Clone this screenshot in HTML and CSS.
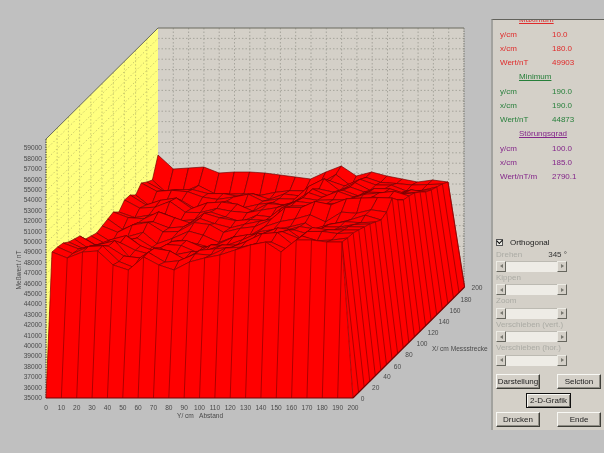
FILE: index.html
```html
<!DOCTYPE html>
<html lang="de">
<head>
<meta charset="utf-8">
<title>Messwert 3D</title>
<link rel="stylesheet" href="styles.css">
</head>
<body>
<div class="stage">
  <svg class="chart" id="chart" width="491" height="453" viewBox="0 0 491 453" xmlns="http://www.w3.org/2000/svg">
    <polygon class="wall-back" points="158,28 464,28 464,287 158,287"/>
    <polygon class="wall-side" points="46,139 158,28 158,287 46,398"/>
    <g id="grid"></g>
    <line class="edge" x1="158" y1="28" x2="464" y2="28"/>
    <line class="edge" x1="46" y1="139" x2="158" y2="28"/>
    <line class="edge-dot" x1="46" y1="139" x2="46" y2="398"/>
    <line class="edge-dot right" x1="464" y1="28" x2="464" y2="287"/>
    <g id="surface"></g>
    <g class="ticks end">
      <text x="42" y="400">35000</text><text x="42" y="389.6">36000</text><text x="42" y="379.2">37000</text><text x="42" y="368.8">38000</text><text x="42" y="358.4">39000</text>
      <text x="42" y="348">40000</text><text x="42" y="337.6">41000</text><text x="42" y="327.2">42000</text><text x="42" y="316.8">43000</text><text x="42" y="306.4">44000</text>
      <text x="42" y="296">45000</text><text x="42" y="285.6">46000</text><text x="42" y="275.2">47000</text><text x="42" y="264.8">48000</text><text x="42" y="254.4">49000</text>
      <text x="42" y="244">50000</text><text x="42" y="233.6">51000</text><text x="42" y="223.2">52000</text><text x="42" y="212.8">53000</text><text x="42" y="202.4">54000</text>
      <text x="42" y="192">55000</text><text x="42" y="181.6">56000</text><text x="42" y="171.2">57000</text><text x="42" y="160.8">58000</text><text x="42" y="150.4">59000</text>
    </g>
    <g class="ticks mid">
      <text x="46" y="409.5">0</text><text x="61.4" y="409.5">10</text><text x="76.7" y="409.5">20</text><text x="92" y="409.5">30</text><text x="107.4" y="409.5">40</text>
      <text x="122.8" y="409.5">50</text><text x="138.1" y="409.5">60</text><text x="153.5" y="409.5">70</text><text x="168.8" y="409.5">80</text><text x="184.2" y="409.5">90</text>
      <text x="199.5" y="409.5">100</text><text x="214.9" y="409.5">110</text><text x="230.2" y="409.5">120</text><text x="245.6" y="409.5">130</text><text x="260.9" y="409.5">140</text>
      <text x="276.3" y="409.5">150</text><text x="291.6" y="409.5">160</text><text x="307" y="409.5">170</text><text x="322.3" y="409.5">180</text><text x="337.7" y="409.5">190</text><text x="353" y="409.5">200</text>
    </g>
    <g class="ticks mid">
      <text x="362.5" y="400.5">0</text><text x="375.7" y="389.5">20</text><text x="387" y="378.5">40</text><text x="397.5" y="368.5">60</text><text x="409" y="356.5">80</text>
      <text x="422" y="345.5">100</text><text x="433" y="334.5">120</text><text x="444" y="323.5">140</text><text x="455" y="312.5">160</text><text x="466" y="301.5">180</text><text x="477" y="289.5">200</text>
    </g>
    <text class="ticks" x="177" y="417.5" xml:space="preserve">Y/ cm   Abstand</text>
    <text class="ticks" x="432" y="350.5">X/ cm Messstrecke</text>
    <text class="ticks mid" transform="translate(21 270) rotate(-90)">Meßwert / nT</text>
  </svg>

  <aside class="panel">
    <div class="info">
      <div class="heading red">Maximum</div>
      <div class="row red"><span>y/cm</span><span>10.0</span></div>
      <div class="row red"><span>x/cm</span><span>180.0</span></div>
      <div class="row red"><span>Wert/nT</span><span>49903</span></div>
      <div class="heading green">Minimum</div>
      <div class="row green"><span>y/cm</span><span>190.0</span></div>
      <div class="row green"><span>x/cm</span><span>190.0</span></div>
      <div class="row green"><span>Wert/nT</span><span>44873</span></div>
      <div class="heading purple">Störungsgrad</div>
      <div class="row purple"><span>y/cm</span><span>100.0</span></div>
      <div class="row purple"><span>x/cm</span><span>185.0</span></div>
      <div class="row purple"><span>Wert/nT/m</span><span>2790.1</span></div>
    </div>

    <label class="check"><span class="box"></span>Orthogonal</label>

    <div class="slider">
      <div class="slider-label"><span>Drehen</span><span class="slider-value">345 °</span></div>
      <div class="bar"><span class="arrow left"></span><span class="arrow right"></span></div>
    </div>
    <div class="slider">
      <div class="slider-label"><span>Kippen</span></div>
      <div class="bar"><span class="arrow left"></span><span class="arrow right"></span></div>
    </div>
    <div class="slider">
      <div class="slider-label"><span>Zoom</span></div>
      <div class="bar"><span class="arrow left"></span><span class="arrow right"></span></div>
    </div>
    <div class="slider">
      <div class="slider-label"><span>Verschieben (vert.)</span></div>
      <div class="bar"><span class="arrow left"></span><span class="arrow right"></span></div>
    </div>
    <div class="slider">
      <div class="slider-label"><span>Verschieben (hor.)</span></div>
      <div class="bar"><span class="arrow left"></span><span class="arrow right"></span></div>
    </div>

    <div class="buttons">
      <div class="btn-row"><button class="btn">Darstellung</button><button class="btn">Selction</button></div>
      <div class="btn-row center"><button class="btn default">2-D-Grafik</button></div>
      <div class="btn-row"><button class="btn">Drucken</button><button class="btn">Ende</button></div>
    </div>
  </aside>
</div>
<script src="chart.js"></script>
</body>
</html>
```
FILE: styles.css
```css
* { box-sizing: border-box; }
html, body { margin: 0; padding: 0; background: #c0c0c0; }
body { width: 604px; height: 453px; overflow: hidden; font-family: "Liberation Sans", Arial, sans-serif; }

.stage { display: flex; align-items: flex-start; width: 604px; height: 453px; background: #c0c0c0; filter: blur(0.45px); }
.chart { display: block; flex: none; }

.wall-back { fill: #d4d0c8; }
.wall-side { fill: #ffff80; }
.grid-back { stroke: #a09f96; stroke-width: 0.9; stroke-dasharray: 1.5 2; fill: none; }
.grid-side { stroke: #c4c46a; stroke-width: 0.9; stroke-dasharray: 1.5 2; fill: none; }
.edge { stroke: #6a6a5e; stroke-width: 1; }
.edge-dot { stroke: #33332c; stroke-width: 1; stroke-dasharray: 1.5 1; }
.edge-dot.right { stroke: #77776e; }

.cell { fill: #ff0000; stroke: #700000; stroke-width: 0.65; stroke-linejoin: round; }
.face { fill: #ff0000; stroke: none; }
.bar-line { stroke: #900000; stroke-width: 0.75; }
.floor-line { stroke: #780000; stroke-width: 1.1; }

.ticks { font-size: 6.6px; fill: #4a4a4a; font-family: "Liberation Sans", Arial, sans-serif; }
.ticks.end, .ticks.end text { text-anchor: end; }
.ticks.mid, .ticks.mid text { text-anchor: middle; }

.panel { flex: none; width: 113px; height: 411px; margin-top: 19px; padding: 0 0 3px 3px; background: #d4d0c8; border-left: 2px solid #a2a29e; border-top: 1px solid #62625c; overflow: hidden; font-size: 8px; display: flex; flex-direction: column; }

.info { margin-top: -6.7px; padding-left: 4px; }
.heading { height: 14.25px; line-height: 14.25px; padding-left: 19px; text-decoration: underline; }
.row { height: 14.25px; line-height: 14.25px; display: grid; grid-template-columns: 52px 1fr; }
.red { color: #e02a2a; }
.green { color: #267f3a; }
.purple { color: #84268a; }

.check { height: 12.6px; margin-top: 51.7px; display: flex; align-items: center; gap: 7px; color: #222; }
.box { width: 7px; height: 7px; background: #e8e8e2; border: 1px solid #555; position: relative; flex: none; }
.box::after { content: ""; position: absolute; left: 0; top: -1px; width: 4px; height: 2.5px; border-left: 1.6px solid #000; border-bottom: 1.6px solid #000; transform: rotate(-45deg); }

.slider { height: 23.4px; width: 71px; display: flex; flex-direction: column; }
.slider-label { height: 12.4px; line-height: 12.4px; display: flex; justify-content: space-between; color: #ababa4; white-space: nowrap; }
.slider-value { color: #333; }
.bar { height: 11px; display: flex; justify-content: space-between; background: #eeece6; box-shadow: inset 0 1px 0 #bcbab2; }
.arrow { width: 10px; height: 11px; background: #d4d0c8; border: 1px solid; border-color: #ecebe4 #66665e #66665e #ecebe4; display: flex; align-items: center; justify-content: center; }
.arrow::after { content: ""; border-style: solid; border-color: transparent; border-width: 2.5px 3px; }
.arrow.left::after { border-right-color: #77776f; margin-left: -3px; }
.arrow.right::after { border-left-color: #77776f; margin-right: -3px; }

.buttons { margin-top: 8.4px; width: 105px; display: flex; flex-direction: column; gap: 4px; }
.btn-row { display: flex; justify-content: space-between; }
.btn-row.center { justify-content: center; }
.btn { width: 44px; height: 15px; padding: 0; font: 8px "Liberation Sans", Arial, sans-serif; color: #222; background: #d4d0c8; border: 1px solid; border-color: #f8f8f4 #3e3e38 #3e3e38 #f8f8f4; box-shadow: inset -1px -1px 0 #8e8c84; }
.btn.default { width: 45px; border: 1px solid #111; box-shadow: inset 1px 1px 0 #f8f8f4, inset -1px -1px 0 #77756e; }
```
FILE: chart.js
```js
(function () {
  var NS = "http://www.w3.org/2000/svg";
  function el(parent, name, cls, attrs) {
    var e = document.createElementNS(NS, name);
    if (cls) e.setAttribute("class", cls);
    for (var k in attrs) e.setAttribute(k, attrs[k]);
    parent.appendChild(e);
    return e;
  }
  function line(parent, cls, a, b, c, d) {
    return el(parent, "line", cls, { x1: a, y1: b, x2: c, y2: d });
  }

  // dotted grids on the two walls
  var grid = document.getElementById("grid");
  var i, j;
  for (i = 1; i < 20; i++) line(grid, "grid-back", 158 + 15.3 * i, 28, 158 + 15.3 * i, 287);
  for (j = 1; j < 25; j++) line(grid, "grid-back", 158, 28 + 10.4 * j, 464, 28 + 10.4 * j);
  for (i = 1; i < 10; i++) line(grid, "grid-side", 46 + 11.2 * i, 139 - 11.1 * i, 46 + 11.2 * i, 398 - 11.1 * i);
  for (j = 1; j < 25; j++) line(grid, "grid-side", 46, 139 + 10.4 * j, 158, 28 + 10.4 * j);

  // measured outline of the surface (front, back: by y/cm; left, right: by x/cm)
  var frontY = [252,258,252,251,265,270,257,265,270,262,258,255,250,245,242,252,240,240,242,242];
  var backY  = [155,169,168,167,173,172,172,173,175,177,179,172,166,176,172,176,179,182,180,182];
  var leftY  = [252,247,243,242,239,236,239,236,233,226,219,212,212,200,195,195,183,182,180,155];
  var rightY = [242,238,233,230,227,224,222,220,212,198,200,200,196,193,192,192,190,187,184,182];
  var N = 20;

  function rnd(a, b) {
    var s = Math.sin(a * 127.1 + b * 311.7 + 13.7) * 43758.5453;
    return (s - Math.floor(s)) * 2 - 1;
  }
  var xFL = 52, xFR = 342, xBL = 158, xBR = 448;
  var nodes = [];
  for (j = 0; j < N; j++) {
    nodes[j] = [];
    var v = j / (N - 1);
    for (i = 0; i < N; i++) {
      var u = i / (N - 1);
      var x = (1 - v) * (xFL + (xFR - xFL) * u) + v * (xBL + (xBR - xBL) * u);
      var y = (1 - v) * frontY[i] + v * backY[i] + (1 - u) * leftY[j] + u * rightY[j]
        - ((1 - u) * (1 - v) * frontY[0] + u * (1 - v) * frontY[N - 1] + (1 - u) * v * backY[0] + u * v * backY[N - 1]);
      if (i > 0 && i < N - 1 && j > 0 && j < N - 1) {
        x += rnd(i, j + 40) * 0.8;
        y += rnd(i, j) * 3.6 + Math.sin(u * 9 + v * 5) * 2;
      }
      nodes[j][i] = [x, y];
    }
  }

  var s = document.getElementById("surface");
  function pts(list) {
    return list.map(function (p) { return p[0].toFixed(1) + "," + p[1].toFixed(1); }).join(" ");
  }
  // back to front so nearer cells cover farther ones
  for (j = N - 2; j >= 0; j--) {
    for (i = 0; i < N - 1; i++) {
      el(s, "polygon", "cell", { points: pts([nodes[j][i], nodes[j][i + 1], nodes[j + 1][i + 1], nodes[j + 1][i]]) });
    }
  }

  // right side face
  var floorR = [];
  for (j = 0; j < N; j++) floorR[j] = [353 + 5.58 * (j + 1), 398 - 5.55 * (j + 1)];
  var rightTop = nodes.map(function (r) { return r[N - 1]; });
  el(s, "polygon", "face", { points: pts([[353, 398]].concat(floorR, rightTop.slice().reverse())) });
  for (j = 0; j < N; j++) {
    line(s, "bar-line", floorR[j][0], floorR[j][1], rightTop[j][0], rightTop[j][1]);
  }

  // front face
  var frontTop = nodes[0];
  el(s, "polygon", "face", { points: pts([[46, 398], [353, 398]].concat(frontTop.slice().reverse())) });
  for (i = 0; i < N; i++) {
    line(s, "bar-line", 46 + 15.35 * i, 398, frontTop[i][0], frontTop[i][1]);
  }
  line(s, "bar-line", 353, 398, frontTop[N - 1][0], frontTop[N - 1][1]);
  for (i = 0; i < N - 1; i++) {
    line(s, "bar-line", frontTop[i][0], frontTop[i][1], frontTop[i + 1][0], frontTop[i + 1][1]);
  }
  for (j = 0; j < N - 1; j++) {
    line(s, "bar-line", rightTop[j][0], rightTop[j][1], rightTop[j + 1][0], rightTop[j + 1][1]);
  }
  line(s, "floor-line", 46, 398, 353, 398);
  line(s, "floor-line", 353, 398, 464.6, 287);
  line(s, "bar-line", 464.6, 287, 448, 182);
})();
```
